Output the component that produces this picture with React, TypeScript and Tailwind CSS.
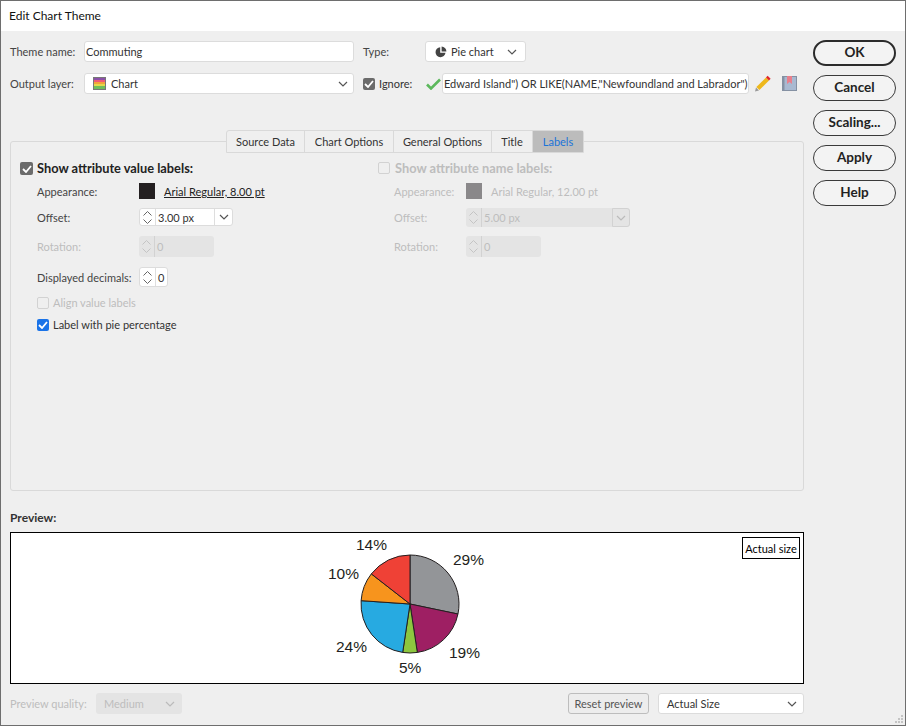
import React from "react";

const polar = (deg: number, r = 49) => {
  const a = (deg * Math.PI) / 180;
  return [410 + r * Math.sin(a), 604 - r * Math.cos(a)];
};
const slices = [
  { from: 0, to: 101.8, c: "#939598" },
  { from: 101.8, to: 171.4, c: "#9e1f63" },
  { from: 171.4, to: 188.6, c: "#8dc63f" },
  { from: 188.6, to: 273.9, c: "#27aae1" },
  { from: 273.9, to: 307.9, c: "#f7941d" },
  { from: 307.9, to: 360, c: "#ef4136" },
];
const piePath = (from: number, to: number) => {
  const [x1, y1] = polar(from);
  const [x2, y2] = polar(to);
  return `M410 604L${x1} ${y1}A49 49 0 0 1 ${x2} ${y2}Z`;
};

const Chevron = ({ color = "#555" }: { color?: string }) => (
  <svg width="10" height="6" viewBox="0 0 10 6" className="shrink-0">
    <path d="M1 1l4 4 4-4" fill="none" stroke={color} strokeWidth="1.2" />
  </svg>
);

const Spin = ({ disabled }: { disabled?: boolean }) => (
  <div className={`w-4 h-full flex flex-col items-center justify-center gap-[3px] border-r ${disabled ? "border-[#d2d2d2]" : "border-[#dedede]"}`}>
    <svg width="9" height="5" viewBox="0 0 9 5"><path d="M.5 4.5l4-4 4 4" fill="none" stroke={disabled ? "#c4c4c4" : "#666"} /></svg>
    <svg width="9" height="5" viewBox="0 0 9 5"><path d="M.5.5l4 4 4-4" fill="none" stroke={disabled ? "#c4c4c4" : "#666"} /></svg>
  </div>
);

const Check = () => (
  <svg width="10" height="8" viewBox="0 0 10 8"><path d="M1 4l3 3 5-6" fill="none" stroke="#fff" strokeWidth="1.8" /></svg>
);

const Btn = ({ children, primary }: { children: React.ReactNode; primary?: boolean }) => (
  <div className={`h-[26px] w-[83px] rounded-[13px] flex items-center justify-center font-bold text-[#222] bg-[#f3f3f3] ${primary ? "border-2 border-[#2b2b2b]" : "border border-[#3a3a3a]"}`}>
    {children}
  </div>
);

const Tab = ({ children, w, active }: { children: React.ReactNode; w: string; active?: boolean }) => (
  <div className={`${w} h-full flex items-center justify-center ${active ? "bg-[#bcbcbc] text-[#1a73d9]" : "border-r border-[#d9d9d9] text-[#333]"}`}>
    {children}
  </div>
);

export default function App() {
  return (
    <div className="w-[906px] h-[726px] flex flex-col bg-[#efefef] border border-[#6e6e6e] text-[11px] leading-none text-[#333] whitespace-nowrap font-['Lato','Noto_Sans',sans-serif] overflow-hidden relative">
      <div className="h-[30px] shrink-0 bg-white flex items-center pl-[8px] text-[12px] text-[#111]">Edit Chart Theme</div>

      <div className="flex flex-1 min-h-0">
        <div className="w-[803px] shrink-0 ml-[9px] flex flex-col">
          {/* Row 1 */}
          <div className="flex items-center h-[21px] mt-[10px]">
            <span className="w-[74px] text-[#444]">Theme name:</span>
            <div className="w-[270px] h-[21px] bg-white border border-[#dcdcdc] rounded-[3px] flex items-center pl-[1px]">Commuting</div>
            <span className="ml-[9px] w-[62px] text-[#444]">Type:</span>
            <div className="w-[101px] h-[21px] bg-white border border-[#dcdcdc] rounded-[3px] flex items-center pl-[9px] pr-[8px]">
              <svg width="12" height="12" viewBox="0 0 12 12" className="shrink-0">
                <path d="M5.2 1.2a5 5 0 1 0 5.3 5.6H5.2z" fill="#444" />
                <path d="M6.6 .6v4.8h4.8A4.9 4.9 0 0 0 6.6 .6z" fill="#444" />
              </svg>
              <span className="ml-[4px] flex-1">Pie chart</span>
              <Chevron />
            </div>
          </div>

          {/* Row 2 */}
          <div className="flex items-center h-[21px] mt-[11px]">
            <span className="w-[74px] text-[#444]">Output layer:</span>
            <div className="w-[270px] h-[21px] bg-white border border-[#dcdcdc] rounded-[3px] flex items-center pl-[8px] pr-[5px]">
              <svg width="13" height="13" viewBox="0 0 13 13" className="shrink-0">
                <rect x="0.5" y="0.5" width="12" height="12" fill="#fff" stroke="#777" />
                <rect x="1" y="1" width="11" height="2" fill="#8b4fa8" />
                <rect x="1" y="3" width="11" height="2" fill="#ef5a78" />
                <rect x="1" y="5" width="11" height="2" fill="#f2a33a" />
                <rect x="1" y="7" width="11" height="2" fill="#e4d84a" />
                <rect x="1" y="9" width="11" height="3" fill="#6fbf5a" />
              </svg>
              <span className="ml-[5px] flex-1">Chart</span>
              <Chevron />
            </div>
            <div className="ml-[9px] w-[12px] h-[12px] bg-[#6b6b6b] rounded-[2px] flex items-center justify-center"><Check /></div>
            <span className="ml-[4px] w-[47px] text-[#333]">Ignore:</span>
            <svg width="15" height="12" viewBox="0 0 15 12" className="shrink-0"><path d="M1 6.5l4 4 9-9" fill="none" stroke="#5cb85c" strokeWidth="2.6" /></svg>
            <div className="ml-[1px] w-[307px] h-[21px] bg-white border border-[#dcdcdc] rounded-[3px] flex items-center pl-[1px]">Edward Island") OR LIKE(NAME,"Newfoundland and Labrador")</div>
            <svg width="17" height="17" viewBox="0 0 17 17" className="ml-[6px] shrink-0">
              <path d="M0 16.5l1-4 3 3z" fill="#999" />
              <path d="M1.4 12L11 2.4l3 3L4.4 15z" fill="#eeb81c" />
              <path d="M11 2.4L12.6 .8l3 3L14 5.4z" fill="#e0262b" />
            </svg>
            <svg width="15" height="15" viewBox="0 0 15 15" className="ml-[10px] shrink-0">
              <rect width="15" height="15" fill="#8591a3" />
              <rect x="2.5" y="1" width="11.5" height="13" fill="#a9b9d1" />
              <path d="M5 0h5v8L7.5 6 5 8z" fill="#e87f8c" />
            </svg>
          </div>

          {/* Tabs + panel */}
          <div className="mt-[36px] relative">
            <div className="absolute left-[216px] top-0 h-[23px] flex border border-[#d9d9d9] rounded-t-[3px] bg-[#efefef] z-10">
              <Tab w="w-[78px]">Source Data</Tab>
              <Tab w="w-[89px]">Chart Options</Tab>
              <Tab w="w-[98px]">General Options</Tab>
              <Tab w="w-[41px]">Title</Tab>
              <Tab w="w-[50px]" active>Labels</Tab>
            </div>
            <div className="mt-[11px] h-[350px] w-[794px] pt-[20px] border border-[#d9d9d9] rounded-[3px] flex">
              <div className="w-[357px] pl-[9px]">
                <div className="h-[21px] flex items-start">
                  <div className="w-[13px] h-[13px] bg-[#6b6b6b] rounded-[2px] flex items-center justify-center"><Check /></div>
                  <span className="ml-[4px] font-bold text-[12.8px] text-[#222]">Show attribute value labels:</span>
                </div>
                <div className="flex items-center h-[16px] pl-[17px]">
                  <span className="w-[102px] text-[#444]">Appearance:</span>
                  <div className="w-[16px] h-[16px] bg-[#231f20]" />
                  <span className="ml-[9px] underline text-[#222]">Arial Regular, 8.00 pt</span>
                </div>
                <div className="flex items-center h-[18px] pl-[17px] mt-[9px]">
                  <span className="w-[102px] text-[#444]">Offset:</span>
                  <div className="w-[94px] h-[18px] bg-white border border-[#dcdcdc] rounded-[3px] flex items-center">
                    <Spin />
                    <span className="ml-[2px] flex-1">3.00 px</span>
                    <div className="w-[18px] h-full border-l border-[#dedede] flex items-center justify-center"><Chevron /></div>
                  </div>
                </div>
                <div className="flex items-center h-[21px] pl-[17px] mt-[10px] text-[#bdbdbd]">
                  <span className="w-[102px]">Rotation:</span>
                  <div className="w-[75px] h-[21px] bg-[#e4e4e4] rounded-[3px] flex items-center">
                    <Spin disabled />
                    <span className="ml-[2px]">0</span>
                  </div>
                </div>
                <div className="flex items-center h-[20px] pl-[17px] mt-[10px]">
                  <span className="w-[102px] text-[#444]">Displayed decimals:</span>
                  <div className="w-[29px] h-[20px] bg-white border border-[#dcdcdc] rounded-[3px] flex items-center">
                    <Spin />
                    <span className="ml-[2px]">0</span>
                  </div>
                </div>
                <div className="flex items-center h-[13px] pl-[17px] mt-[9px] text-[#bdbdbd]">
                  <div className="w-[12px] h-[12px] border border-[#d2d2d2] rounded-[2px]" />
                  <span className="ml-[4px]">Align value labels</span>
                </div>
                <div className="flex items-center h-[13px] pl-[17px] mt-[9px]">
                  <div className="w-[12px] h-[12px] bg-[#1a73e8] rounded-[2px] flex items-center justify-center"><Check /></div>
                  <span className="ml-[4px] text-[#333]">Label with pie percentage</span>
                </div>
              </div>

              <div className="flex-1 pl-[10px] text-[#bdbdbd]">
                <div className="h-[21px] flex items-start">
                  <div className="w-[12px] h-[12px] border border-[#d2d2d2] rounded-[2px]" />
                  <span className="ml-[5px] font-bold text-[12.8px]">Show attribute name labels:</span>
                </div>
                <div className="flex items-center h-[16px] pl-[16px]">
                  <span className="w-[72px]">Appearance:</span>
                  <div className="w-[16px] h-[16px] bg-[#8a888a]" />
                  <span className="ml-[9px]">Arial Regular, 12.00 pt</span>
                </div>
                <div className="flex items-center h-[19px] pl-[16px] mt-[9px]">
                  <span className="w-[72px]">Offset:</span>
                  <div className="w-[164px] h-[19px] bg-[#e4e4e4] rounded-[3px] flex items-center">
                    <Spin disabled />
                    <span className="ml-[2px] flex-1">5.00 px</span>
                    <div className="w-[18px] h-full border border-[#d2d2d2] rounded-r-[3px] flex items-center justify-center"><Chevron color="#bbb" /></div>
                  </div>
                </div>
                <div className="flex items-center h-[21px] pl-[16px] mt-[9px]">
                  <span className="w-[72px]">Rotation:</span>
                  <div className="w-[75px] h-[21px] bg-[#e4e4e4] rounded-[3px] flex items-center">
                    <Spin disabled />
                    <span className="ml-[2px]">0</span>
                  </div>
                </div>
              </div>
            </div>
          </div>

          {/* Preview */}
          <div className="mt-[21px] font-bold text-[12px] text-[#333] h-[11px] flex items-center">Preview:</div>
          <div className="mt-[9px] w-[794px] h-[152px] bg-white border border-black relative">
            <svg width="792" height="150" viewBox="11 533 792 150" className="block">
              {slices.map((s) => (
                <path key={s.c} d={piePath(s.from, s.to)} fill={s.c} stroke="#231f20" strokeWidth="1" />
              ))}
              <g fontFamily="'Liberation Sans', Arial, sans-serif" fontSize="15.5" fill="#231f20">
                <text x="356" y="550">14%</text>
                <text x="453" y="565">29%</text>
                <text x="328" y="579">10%</text>
                <text x="336" y="652">24%</text>
                <text x="449" y="658">19%</text>
                <text x="399" y="673">5%</text>
              </g>
            </svg>
            <div className="absolute right-[3px] top-[4px] w-[58px] h-[22px] border border-black bg-white flex items-center justify-center text-black">Actual size</div>
          </div>

          {/* Bottom */}
          <div className="flex items-center h-[21px] mt-[9px] w-[794px]">
            <span className="w-[86px] text-[#bdbdbd]">Preview quality:</span>
            <div className="w-[86px] h-[21px] bg-[#e4e4e4] rounded-[3px] flex items-center justify-between pl-[8px] pr-[7px] text-[#bdbdbd]">
              Medium<Chevron color="#bbb" />
            </div>
            <div className="ml-auto w-[81px] h-[21px] border border-[#bdbdbd] rounded-[3px] bg-[#ededed] flex items-center justify-center text-[#555]">Reset preview</div>
            <div className="ml-[9px] w-[146px] h-[21px] bg-white border border-[#dcdcdc] rounded-[3px] flex items-center justify-between pl-[8px] pr-[6px]">
              Actual Size<Chevron />
            </div>
          </div>
        </div>

        {/* Buttons */}
        <div className="mt-[9px] flex flex-col gap-[9px] text-[13.5px]">
          <Btn primary>OK</Btn>
          <Btn>Cancel</Btn>
          <Btn>Scaling...</Btn>
          <Btn>Apply</Btn>
          <Btn>Help</Btn>
        </div>
      </div>

      <svg width="10" height="10" viewBox="0 0 10 10" className="absolute right-[1px] bottom-[1px]">
        <g fill="#c4c4c4">
          <rect x="7" y="1" width="2" height="2" />
          <rect x="4" y="4" width="2" height="2" />
          <rect x="7" y="4" width="2" height="2" />
          <rect x="1" y="7" width="2" height="2" />
          <rect x="4" y="7" width="2" height="2" />
          <rect x="7" y="7" width="2" height="2" />
        </g>
      </svg>
    </div>
  );
}
